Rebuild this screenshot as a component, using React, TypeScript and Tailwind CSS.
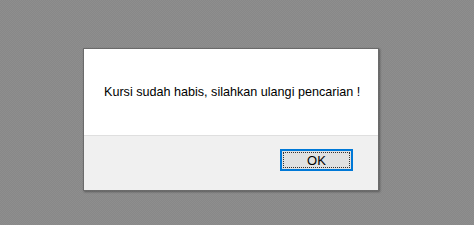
export default function App() {
  return (
    <div className="w-[474px] h-[225px] bg-[#8b8b8b] bg-[repeating-conic-gradient(#888888_0_25%,#8e8e8e_0_50%)] bg-[length:2px_2px] pl-[83px] pt-[48px] font-['Liberation_Sans',Arial,sans-serif]">
      <div className="w-[296px] border border-[#6b6b6b] shadow-[1px_1px_2px_rgba(0,0,0,0.35)] bg-white">
        {/* message */}
        <div className="h-[86px] flex items-center pl-[20px] text-[12.6px] text-black">
          Kursi sudah habis, silahkan ulangi pencarian !
        </div>
        {/* footer */}
        <div className="h-[55px] border-t border-[#dfdfdf] bg-[#f0f0f0] flex justify-end items-start pt-[13px] pr-[25px]">
          <button className="w-[73px] h-[22px] border-2 border-[#0078d7] bg-[#e1e1e1] p-[1px]">
            <div className="w-full h-full border border-dotted border-[#333] flex items-center justify-center text-[13px] text-black leading-none">
              OK
            </div>
          </button>
        </div>
      </div>
    </div>
  );
}
